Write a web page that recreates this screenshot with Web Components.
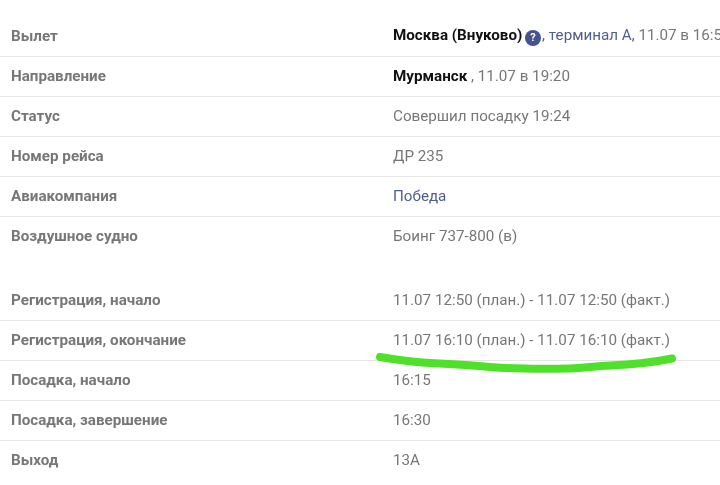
<!DOCTYPE html>
<html lang="ru">
<head>
<meta charset="utf-8">
<title>Рейс ДР 235</title>
<style>
    html, body{
        margin:0;
        height:485px;
        overflow:hidden;
        background:#fff;
    }
</style>
</head>
<body>
<flight-table>
    <flight-row label="Вылет"><b>Москва (Внуково)</b> <help-icon></help-icon><a>, терминал А,</a> 11.07 в 16:50</flight-row>
    <flight-row label="Направление"><b>Мурманск</b> , 11.07 в 19:20</flight-row>
    <flight-row label="Статус">Совершил посадку 19:24</flight-row>
    <flight-row label="Номер рейса">ДР 235</flight-row>
    <flight-row label="Авиакомпания"><a>Победа</a></flight-row>
    <flight-row label="Воздушное судно" plain>Боинг 737-800 (в)</flight-row>
    <flight-row label="Регистрация, начало" spaced>11.07 12:50 (план.) - 11.07 12:50 (факт.)</flight-row>
    <flight-row label="Регистрация, окончание">11.07 16:10 (план.) - 11.07 16:10 (факт.)</flight-row>
    <flight-row label="Посадка, начало">16:15</flight-row>
    <flight-row label="Посадка, завершение">16:30</flight-row>
    <flight-row label="Выход" plain>13А</flight-row>
</flight-table>
<script>
class FlightTable extends HTMLElement {
    constructor() {
        super();
        this.attachShadow({mode: 'open'}).innerHTML = `
        <style>
            :host{
                display:block;
                position:relative;
                width:720px;
                height:485px;
                padding-top:17px;
                box-sizing:border-box;
                overflow:hidden;
                font-family:Roboto, "Liberation Sans", sans-serif;
                font-size:15.2px;
                filter:blur(.3px);
            }
            svg{
                position:absolute;
                left:0;
                top:0;
                pointer-events:none;
            }
        </style>
        <slot></slot>
        <svg width="720" height="485" viewBox="0 0 720 485">
            <path d="M380 357C395 359.500 410 362 430 363C450 364 470 365 490 367C515 369 545 369 570 368.500C585 368 595 366 610 365.500C635 364.500 655 362 672 358.500"
                fill="none" stroke="#4fe029" stroke-width="8" stroke-linecap="round" stroke-linejoin="round"/>
        </svg>`;
    }
}

class FlightRow extends HTMLElement {
    constructor() {
        super();
        this.attachShadow({mode: 'open'}).innerHTML = `
        <style>
            :host{
                display:grid;
                grid-template-columns:393px 1fr;
                align-items:center;
                height:40px;
                padding-bottom:1px;
                box-sizing:border-box;
                border-bottom:1px solid #e6e6e6;
                white-space:nowrap;
                color:#777;
            }
            :host([plain]){
                border-bottom:none;
                padding-bottom:2px;
            }
            :host([spaced]){
                margin-top:24px;
            }
            .label{
                padding-left:11px;
                font-weight:700;
                color:#777;
            }
            .value{
                overflow:hidden;
            }
            ::slotted(b){
                font-weight:700;
                color:#111;
            }
            ::slotted(a){
                color:#4f5f8e;
            }
        </style>
        <div class="label"></div>
        <div class="value"><slot></slot></div>`;
        this.shadowRoot.querySelector('.label').textContent = this.getAttribute('label');
    }
}

class HelpIcon extends HTMLElement {
    constructor() {
        super();
        this.attachShadow({mode: 'open'}).innerHTML = `
        <style>
            :host{
                display:inline-flex;
                align-items:center;
                justify-content:center;
                width:16px;
                height:16px;
                margin-left:-1px;
                margin-right:1px;
                vertical-align:-1px;
                border-radius:50%;
                background:#44548f;
                color:#fff;
                font-size:11px;
                font-weight:700;
                line-height:16px;
            }
        </style>?`;
    }
}

customElements.define('flight-table', FlightTable);
customElements.define('flight-row', FlightRow);
customElements.define('help-icon', HelpIcon);
</script>
</body>
</html>
